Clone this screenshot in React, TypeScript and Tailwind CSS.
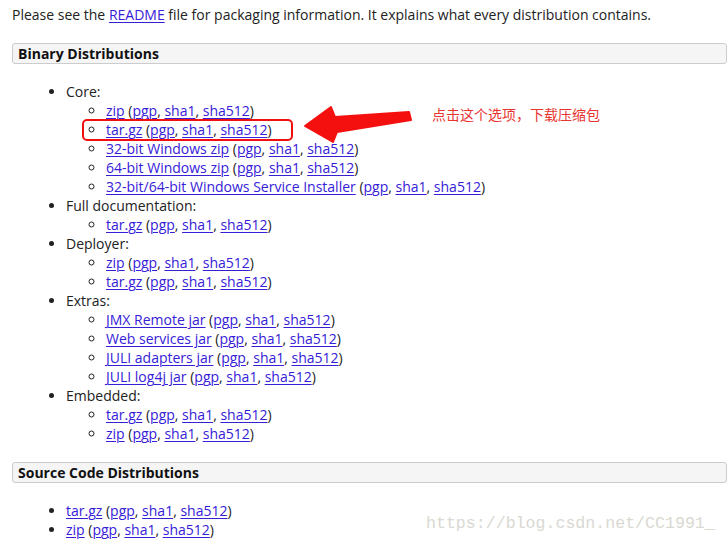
const link = 'text-[#3520d8] underline underline-offset-2 decoration-1'

interface Item {
  label: string
}

function Sigs() {
  return (
    <>
      {' ('}
      <a className={link}>pgp</a>, <a className={link}>sha1</a>, <a className={link}>sha512</a>)
    </>
  )
}

function Sub({ items }: { items: Item[] }) {
  return (
    <ul className="list-[circle] pl-10">
      {items.map((it, i) => (
        <li key={i}>
          <a className={link}>{it.label}</a>
          <Sigs />
        </li>
      ))}
    </ul>
  )
}

const groups: { title: string; items: string[] }[] = [
  {
    title: 'Core:',
    items: ['zip', 'tar.gz', '32-bit Windows zip', '64-bit Windows zip', '32-bit/64-bit Windows Service Installer'],
  },
  { title: 'Full documentation:', items: ['tar.gz'] },
  { title: 'Deployer:', items: ['zip', 'tar.gz'] },
  { title: 'Extras:', items: ['JMX Remote jar', 'Web services jar', 'JULI adapters jar', 'JULI log4j jar'] },
  { title: 'Embedded:', items: ['tar.gz', 'zip'] },
]

function Header({ children }: { children: string }) {
  return (
    <div className="h-[21px] border border-[#cccccc] bg-[#f5f5f5] rounded-[3px] pl-[5px] font-bold leading-[19px] text-[#111]">
      {children}
    </div>
  )
}

export default function App() {
  return (
    <div
      className="relative w-[727px] h-[544px] overflow-hidden bg-white text-[14px] leading-[19px] text-[#222]"
      style={{ fontFamily: '"Open Sans", "Noto Sans", sans-serif' }}
    >
      <div className="pl-3 pt-[5px]">
        <p>
          Please see the <a className={link}>README</a> file for packaging information. It explains what every
          distribution contains.
        </p>
        <div className="mt-[19px]">
          <Header>Binary Distributions</Header>
        </div>
        <ul className="list-disc pl-[54px] mt-[18px]">
          {groups.map((g) => (
            <li key={g.title}>
              {g.title}
              <Sub items={g.items.map((label) => ({ label }))} />
            </li>
          ))}
        </ul>
        <div className="mt-[19px]">
          <Header>Source Code Distributions</Header>
        </div>
        <ul className="list-disc pl-[54px] mt-[18px]">
          <li>
            <a className={link}>tar.gz</a>
            <Sigs />
          </li>
          <li>
            <a className={link}>zip</a>
            <Sigs />
          </li>
        </ul>
      </div>

      {/* annotation */}
      <div className="absolute left-[82px] top-[119px] w-[211px] h-[22px] border-[2.5px] border-[#f01010] rounded-[5px]" />
      <svg className="absolute left-0 top-0" width="727" height="544" viewBox="0 0 727 544">
        <polygon
          points="305,126 331,107 335,117 409,112 411,120 337,132 333,142"
          fill="#f51010"
          stroke="#f51010"
          strokeWidth="2"
          strokeLinejoin="round"
        />
      </svg>
      <div
        className="absolute left-[432px] top-[104px] text-[14px] leading-[20px] text-[#e8342f]"
        style={{ fontFamily: '"Noto Sans CJK SC", sans-serif' }}
      >
        点击这个选项，下载压缩包
      </div>
      <div
        className="absolute left-[426px] top-[513px] text-[16.6px] leading-[22px] text-[#d9d9d2]"
        style={{ fontFamily: '"Liberation Mono", monospace' }}
      >
        https://blog.csdn.net/CC1991_
      </div>
    </div>
  )
}
